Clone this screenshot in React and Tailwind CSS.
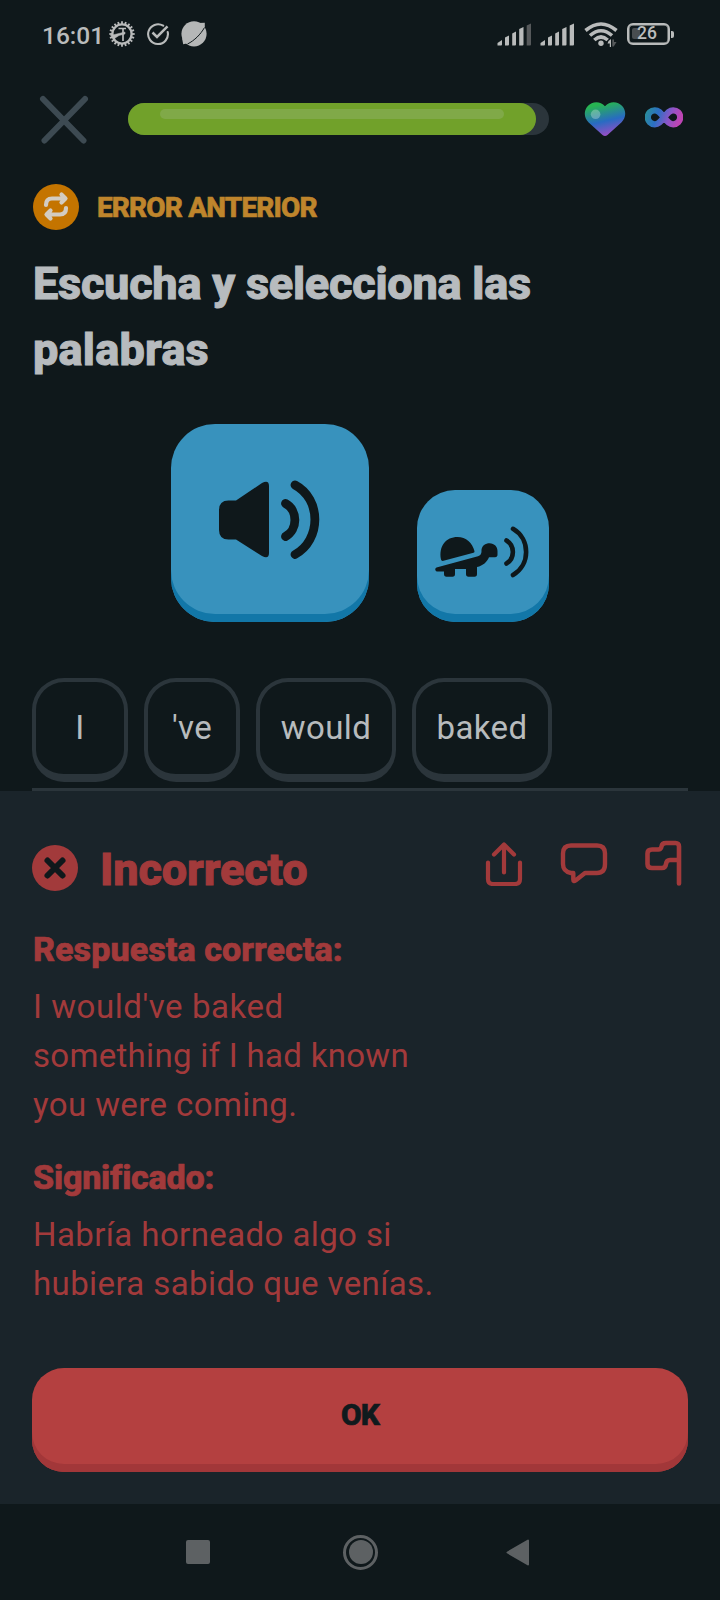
import React from "react";

function GearIcon() {
  const teeth = Array.from({ length: 20 }, (_, i) => i * 18);
  return (
    <svg className="h-[26px] w-[26px]" viewBox="-13 -13 26 26" fill="none" stroke="#b9bbbb">
      <circle r="9.6" strokeWidth="2.3" />
      {teeth.map((a) => (
        <path key={a} d="M0-10V-12.7" strokeWidth="1.8" transform={`rotate(${a})`} />
      ))}
      <path d="M-3.5-5.500H4M1-5.500V7" strokeWidth="1.7" />
      <path d="M-11.500 1.500L3-2V0L-3 1.500-8 4.800Z" fill="#b9bbbb" strokeWidth=".5" />
    </svg>
  );
}

function CheckIcon() {
  return (
    <svg className="h-6 w-6" viewBox="0 0 24 24" fill="none" stroke="#b9bbbb" strokeWidth="2.1">
      <path d="M17.200 3.700A9.900 9.900 0 1 0 21.700 10" strokeLinecap="round" />
      <path d="M6.500 10.500L11 15 21.500 4.300" strokeWidth="2.500" />
    </svg>
  );
}

function PlanetIcon() {
  return (
    <svg className="h-[26px] w-[26px]" viewBox="0 0 26 26">
      <circle cx="13" cy="12.800" r="12.600" fill="#b5b7b7" />
      <path d="M17 2L23.800 1.800 23.800 8ZM1 17L2.200 23.300 8 22Z" fill="#b5b7b7" />
      <path d="M23.500 6.500C19.500 13.500 13.500 19.500 6.500 23" stroke="#0f181b" strokeWidth="1" fill="none" />
    </svg>
  );
}

function Signal({ weak }) {
  return (
    <svg className="h-[23px] w-[35px]" viewBox="0 0 35 23" fill="#b9bbbb">
      <path d="M0.500 22.500V20L5 17V21.500Q5 22.500 4 22.500Z" />
      <path d="M8 14.500L12 12.500V21.500Q12 22.500 11 22.500H8Z" />
      <path d="M15.200 10.500L19 8.500V21.500Q19 22.500 18 22.500H15.200Z" />
      <path d="M22.200 6L26.500 4V21.500Q26.500 22.500 25.500 22.500H22.200Z" />
      <path d="M29.700 2.500L34 0.500V21.500Q34 22.500 33 22.500H29.700Z" fill={weak ? "#56595b" : "#b9bbbb"} />
    </svg>
  );
}

function Wifi() {
  return (
    <svg className="h-[27px] w-[34px]" viewBox="0 0 34 27" fill="none" stroke="#b9bbbb" strokeWidth="3.600">
      <path d="M1.500 9.500Q17-3.500 32.500 9.500" />
      <path d="M6 14.500Q17 5 28 14.500" />
      <path d="M10.300 19Q17 13 23.700 19" />
      <circle cx="17" cy="22.300" r="2.700" fill="#b9bbbb" stroke="none" />
      <path d="M24.500 20L27 18V26H25.800V22.500H23.500Z" fill="#b9bbbb" stroke="none" />
      <path d="M28.300 18.500H30V21H32.500L29.700 25.500H28.300Z" fill="#56595b" stroke="none" />
    </svg>
  );
}

function StatusBar() {
  return (
    <div className="flex h-[69px] items-start pt-[21px] text-[#b9bbbb]">
      <span className="ml-[42px] w-[67px] text-[24.500px] leading-[30px] font-medium [font-family:Roboto,sans-serif]">16:01</span>
      <GearIcon />
      <div className="ml-[11px] mt-px"><CheckIcon /></div>
      <div className="ml-[11px]"><PlanetIcon /></div>
      <div className="ml-[290px] mt-[2px]"><Signal weak /></div>
      <div className="ml-[8px] mt-[2px]"><Signal /></div>
      <div className="ml-[9px]"><Wifi /></div>
      <div className="ml-[9px] mt-[2px] flex items-center">
        <div className="relative flex h-[22px] w-[43px] items-center justify-center rounded-[6px] border-[2.500px] border-[#b9bbbb] text-[17.500px] leading-none font-medium shadow-[inset_0_0_0_0.500px_#b9bbbb] [font-family:Roboto,sans-serif]">
          <div className="absolute left-[3px] top-[3px] h-[11px] w-[8px] rounded-[2px] bg-[#484d50]" />
          <span className="relative ml-[-3px]">26</span>
        </div>
        <div className="ml-px h-[7px] w-[3px] rounded-r-[2px] bg-[#b9bbbb]" />
      </div>
    </div>
  );
}

function Heart() {
  return (
    <svg className="h-[35px] w-[42px]" viewBox="0 0 42 35">
      <defs>
        <linearGradient id="heart" x1="14" y1="1" x2="22" y2="35" gradientUnits="userSpaceOnUse">
          <stop offset=".05" stopColor="#27b552" />
          <stop offset=".55" stopColor="#286bc2" />
          <stop offset="1" stopColor="#a24bc6" />
        </linearGradient>
      </defs>
      <path d="M21 4.300C26-1.500 34-.6 38.200 4 42.600 9 42 16 37.600 20.200L23.500 33Q21 35 18.500 33L4.400 20.200C0 16-.6 9 3.800 4 8-.6 16-1.500 21 4.300Z" fill="url(#heart)" />
      <circle cx="11.600" cy="12.300" r="4.800" fill="#fff" opacity=".28" />
    </svg>
  );
}

function Infinity() {
  return (
    <svg className="h-[21px] w-[38px]" viewBox="0 0 38 21">
      <defs>
        <linearGradient id="inf" x1="0" y1="0" x2="38" y2="14" gradientUnits="userSpaceOnUse">
          <stop offset=".05" stopColor="#2a8f9a" />
          <stop offset=".35" stopColor="#2b6fc4" />
          <stop offset=".65" stopColor="#8b55c8" />
          <stop offset=".9" stopColor="#bd45b4" />
        </linearGradient>
      </defs>
      <path d="M19 10.300C15.500 6 13.500 3.300 9.800 3.300A7 7 0 0 0 9.800 17.300C13.500 17.300 15.500 14.600 19 10.300 22.500 6 24.500 3.300 28.200 3.300A7 7 0 0 1 28.200 17.300C24.500 17.300 22.500 14.600 19 10.300Z" fill="none" stroke="url(#inf)" strokeWidth="6.300" />
    </svg>
  );
}

function LessonHeader() {
  return (
    <div className="flex h-[102px] items-start pl-[39px]">
      <svg className="mt-[26px] h-[50px] w-[50px]" viewBox="0 0 50 50" stroke="#3d4a52" strokeWidth="6" strokeLinecap="round">
        <path d="M4 4L44.500 45.500M46 4L5.500 45.500" />
      </svg>
      <div className="ml-[39px] mt-[34px] h-8 w-[421px] rounded-full bg-[#2b353b]">
        <div className="h-8 w-[408px] rounded-full bg-[#71a12a] pl-8 pt-[6px]">
          <div className="h-[10px] w-[344px] rounded-full bg-[#80a948]" />
        </div>
      </div>
      <div className="ml-[35px] mt-[33px]"><Heart /></div>
      <div className="ml-[19px] mt-[38px]"><Infinity /></div>
    </div>
  );
}

function Chip({ children, className }) {
  return (
    <div className={"flex h-[104px] items-center justify-center rounded-[32px] border-4 border-b-8 border-[#2b353b] text-[33px] tracking-[0.400px] text-[#b7bbbd] " + className}>
      {children}
    </div>
  );
}

function SpeakerIcon() {
  return (
    <svg className="h-[80px] w-[102px]" viewBox="0 0 102 80" fill="#0f181b">
      <path d="M0 30Q0 20.500 9.500 20.500H17L43 3Q50-.5 50 6V73Q50 79.500 43 76L17 59.500H9.500Q0 59.500 0 50Z" />
      <g fill="none" stroke="#0f181b" strokeWidth="8.800" strokeLinecap="round">
        <path d="M66.500 23.500C79 30 79 50 66.500 56.500" />
        <path d="M76 5C102.500 19 102.500 60 76 74.500" />
      </g>
    </svg>
  );
}

function TurtleIcon() {
  return (
    <svg className="h-[52px] w-[94px]" viewBox="0 0 94 52" fill="#0f181b">
      <path d="M6 33.500C3.500 20 11 11 22.500 11 31 11 37.500 17 39.500 25.200Q39.700 26.400 38.500 26.800L8.500 34.800Q6.300 35.300 6 33.500Z" />
      <path d="M1.500 41.500L43 30.200Q46.500 29 46.500 25.500C46 20 50.500 17.300 54.500 17.300 59.500 17.300 62.500 21 62.500 25V28.500Q62.500 31.200 60 31.200H54C52 36 48 39.500 42 41V48Q42 50.700 39.500 50.700H33.500Q31 50.700 31 48V43H20V48Q20 50.700 17.500 50.700H11.500Q9 50.700 9 48V45.500H2.500A2.100 2.100 0 0 1 1.500 41.500Z" />
      <g fill="none" stroke="#0f181b" strokeWidth="4.600" strokeLinecap="round">
        <path d="M71.500 14.500C80 19.500 80 32.500 71.500 37.500" />
        <path d="M78 2.800C95.500 13 95.500 39 78 49" />
      </g>
    </svg>
  );
}

function ActionIcons() {
  return (
    <div className="mt-[-2px] flex items-start">
      <svg className="h-[46px] w-[38px]" viewBox="0 0 38 46" fill="none" stroke="#a23a3b" strokeWidth="4.200" strokeLinecap="round" strokeLinejoin="round">
        <path d="M3 22.500V39Q3 44 8 44H30Q35 44 35 39V22.500M19 32.500V4.500M9 14.500L19 4.500 29 14.500" />
      </svg>
      <svg className="ml-[37px] h-[46px] w-[48px]" viewBox="0 0 48 46" fill="none" stroke="#a23a3b" strokeWidth="4.400" strokeLinejoin="round">
        <path d="M11 5.500H37Q45 5.500 45 13.500V24Q45 33 37 33H25L15.500 40.500Q13.300 42 13.300 39.500V33H11Q3 31.500 3 24V13.500Q3 5.500 11 5.500Z" />
      </svg>
      <svg className="ml-[36px] h-[48px] w-[38px]" viewBox="0 0 38 48" fill="none" stroke="#a23a3b" strokeWidth="4.600" strokeLinecap="round" strokeLinejoin="round">
        <path d="M35 43.500V6.500Q35 3 31.500 3H22Q18 3 17.500 6.500T13.500 9.500H8Q3.500 9.500 3.500 13.500V24Q3.500 28 8 28H18Q21.500 28 22 24T26 20H35" />
      </svg>
    </div>
  );
}

function Feedback() {
  return (
    <section className="flex h-[713px] flex-col bg-[#1a242a] px-8 text-[#a23a3b]">
      <div className="mt-[51px] flex h-[52px] items-start">
        <svg className="mt-[3px] h-[46px] w-[46px]" viewBox="0 0 46 46">
          <circle cx="23" cy="23" r="23" fill="#a23a3b" />
          <path d="M15.500 15.500L30.500 30.500M30.500 15.500L15.500 30.500" stroke="#0f181b" strokeWidth="6" strokeLinecap="round" />
        </svg>
        <h2 className="ml-[22px] mt-[2px] w-[385px] text-[45px] leading-[52px] font-extrabold tracking-[-0.100px] [-webkit-text-stroke:1px_#a23a3b]">Incorrecto</h2>
        <ActionIcons />
      </div>
      <h3 className="mt-[33px] whitespace-nowrap pl-px text-[34px] leading-[44px] font-extrabold tracking-[0.100px] [-webkit-text-stroke:0.700px_#a23a3b]">Respuesta correcta:</h3>
      <p className="mt-[11px] pl-px text-[33px] leading-[49px] tracking-[0.400px]"><span className="tracking-[0.550px]">I would've baked</span><br /><span className="tracking-[0.300px]">something if I had known</span><br />you were coming.</p>
      <h3 className="mt-[26px] pl-px text-[34px] leading-[44px] font-extrabold tracking-[-0.200px] [-webkit-text-stroke:0.700px_#a23a3b]">Significado:</h3>
      <p className="mt-[11px] pl-px text-[33px] leading-[49px] tracking-[0.400px]">Habría horneado algo si<br />hubiera sabido que venías.</p>
      <button className="mt-auto mb-8 h-[104px] w-full rounded-[32px] bg-[#b44040] pb-[12px] text-[30px] font-extrabold tracking-[-0.800px] text-[#101a1d] shadow-[inset_0_-8px_0_#a23739] [-webkit-text-stroke:0.700px_#101a1d]">OK</button>
    </section>
  );
}

export default function App() {
  return (
    <main className="flex h-[1600px] w-[720px] flex-col overflow-hidden bg-[#0f181b] [font-family:Roboto,'Liberation_Sans',sans-serif]">
      <StatusBar />
      <LessonHeader />
      <div className="mt-[13px] flex h-[46px] items-center pl-[33px]">
        <svg className="h-[46px] w-[46px]" viewBox="0 0 46 46" fill="none" stroke="#d3ccc2" strokeWidth="4.200" strokeLinecap="round" strokeLinejoin="round">
          <circle cx="23" cy="23" r="23" fill="#c47400" stroke="none" />
          <path d="M13 21Q13 14.500 19 14.500H31M28.500 10.500L32.500 14.500 28.500 18.500M33 24Q33 30.500 27 30.500H14M17.500 26.500L13.500 30.500 17.500 34.500" />
        </svg>
        <span className="ml-[18px] mt-[2px] text-[28px] leading-[34px] font-extrabold tracking-[-0.850px] text-[#bf852c] [-webkit-text-stroke:0.600px_#bf852c]">ERROR ANTERIOR</span>
      </div>
      <h1 className="mt-[21px] h-[132px] whitespace-nowrap pl-[33px] text-[45px] leading-[66px] font-extrabold tracking-[-0.230px] text-[#b7bbbe] [-webkit-text-stroke:1px_#b7bbbe]">Escucha y selecciona las<br /><span className="tracking-[0.250px]">palabras</span></h1>
      <div className="mt-[41px] flex h-[198px] items-end justify-center gap-12">
        <button className="flex h-[198px] w-[198px] items-center justify-center rounded-[44px] bg-[#3892bd] pb-[7px] shadow-[inset_0_-8px_0_#1277a8]"><SpeakerIcon /></button>
        <button className="flex h-[132px] w-[132px] items-center justify-center rounded-[38px] bg-[#3892bd] pr-[2px] pb-[9px] shadow-[inset_0_-8px_0_#1277a8]"><TurtleIcon /></button>
      </div>
      <div className="mt-[56px] flex gap-4 pl-8">
        <Chip className="w-24">I</Chip>
        <Chip className="w-24">'ve</Chip>
        <Chip className="w-[140px]">would</Chip>
        <Chip className="w-[140px]">baked</Chip>
      </div>
      <div className="mx-8 mt-[6px] h-[3px] shrink-0 bg-[#2b353b]" />
      <Feedback />
      <nav className="flex h-24 items-center text-[#5d6163]">
        <div className="ml-[186px] h-6 w-6 rounded-[2px] bg-[#5d6163]" />
        <div className="ml-[133px] flex h-[35px] w-[35px] items-center justify-center rounded-full border-[3px] border-[#5d6163]">
          <div className="h-6 w-6 rounded-full bg-[#5d6163]" />
        </div>
        <svg className="ml-[128px] h-[27px] w-[23px]" viewBox="0 0 23 27" fill="#5d6163" stroke="#5d6163" strokeWidth="2" strokeLinejoin="round"><path d="M1.500 13.500L22 1.500V25.500Z" /></svg>
      </nav>
    </main>
  );
}
